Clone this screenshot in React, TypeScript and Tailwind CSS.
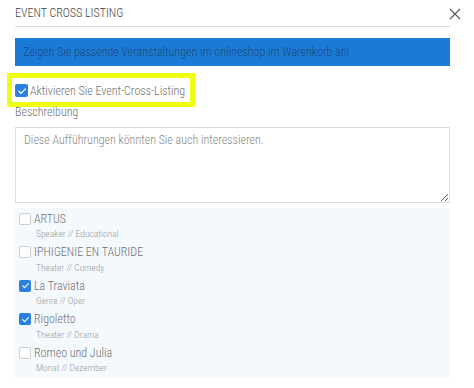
const items = [
  { title: "ARTUS", sub: "Speaker // Educational", checked: false },
  { title: "IPHIGENIE EN TAURIDE", sub: "Theater // Comedy", checked: false },
  { title: "La Traviata", sub: "Genre // Oper", checked: true },
  { title: "Rigoletto", sub: "Theater // Drama", checked: true },
  { title: "Romeo und Julia", sub: "Monat // Dezember", checked: false },
];

function Box({ checked, size }: { checked: boolean; size: number }) {
  if (checked) {
    return (
      <span
        className="flex shrink-0 items-center justify-center rounded-[2px] bg-[#2b7fdf]"
        style={{ width: size, height: size }}
      >
        <svg width={size - 3} height={size - 3} viewBox="0 0 10 10" fill="none">
          <path d="M1.8 5.2 L4 7.3 L8.4 2.8" stroke="white" strokeWidth="1.2" strokeLinecap="round" strokeLinejoin="round" />
        </svg>
      </span>
    );
  }
  return (
    <span
      className="shrink-0 rounded-[2px] border border-[#cfcfcf] bg-white"
      style={{ width: size, height: size }}
    />
  );
}

export default function App() {
  return (
    <div
      className="relative h-[388px] w-[474px] overflow-hidden bg-white pl-[15px] pr-[24px] font-light text-[#707070]"
      style={{ fontFamily: "'Roboto Condensed', 'Liberation Sans', sans-serif" }}
    >
      <div className="flex h-[27px] items-center border-b border-[#d9d9d9] text-[12px] leading-[16px] text-[#444]">
        EVENT CROSS LISTING
      </div>
      <button className="absolute left-[449px] top-[8px] flex h-[12px] w-[12px] items-center justify-center">
        <svg width="12" height="12" viewBox="0 0 12 12" fill="none">
          <path d="M1 1 L11 11 M11 1 L1 11" stroke="#555" strokeWidth="1.1" />
        </svg>
      </button>

      <div className="mt-[11px] flex h-[28px] items-center bg-[#1b7ad5] pl-[8px] text-[12px] text-[#1d4b79]">
        Zeigen Sie passende Veranstaltungen im onlineshop im Warenkorb an!
      </div>

      <div className="relative mt-[16px] flex h-[17px] items-center gap-[2px] text-[12px] leading-[16px]">
        <Box checked size={13} />
        <span>Aktivieren Sie Event-Cross-Listing</span>
        <div className="pointer-events-none absolute left-[-8px] top-[-9px] h-[34px] w-[188px] border-[5px] border-[#eeff10]" />
      </div>

      <div className="mt-[5px] h-[16px] text-[12px] leading-[16px]">Beschreibung</div>

      <textarea
        className="mt-[7px] block h-[76px] w-full border border-[#dcdcdc] px-[8px] pt-[4px] text-[12px] font-light leading-[16px] text-[#666] placeholder:text-[#888] outline-none"
        style={{ fontFamily: "'Roboto Condensed', 'Liberation Sans', sans-serif" }}
        placeholder="Diese Aufführungen könnten Sie auch interessieren."
      />

      <div className="mt-[5px] h-[170px] bg-[#f4f9fe] pl-[4px] pt-[2px]">
        {items.map((it) => (
          <div key={it.title} className="h-[33.5px]">
            <div className="flex h-[17px] items-center gap-[3px] text-[12px] leading-[16px]">
              <Box checked={it.checked} size={12} />
              <span>{it.title}</span>
            </div>
            <div className="pl-[17px] text-[9.5px] leading-[14px] text-[#999]">{it.sub}</div>
          </div>
        ))}
      </div>
    </div>
  );
}
